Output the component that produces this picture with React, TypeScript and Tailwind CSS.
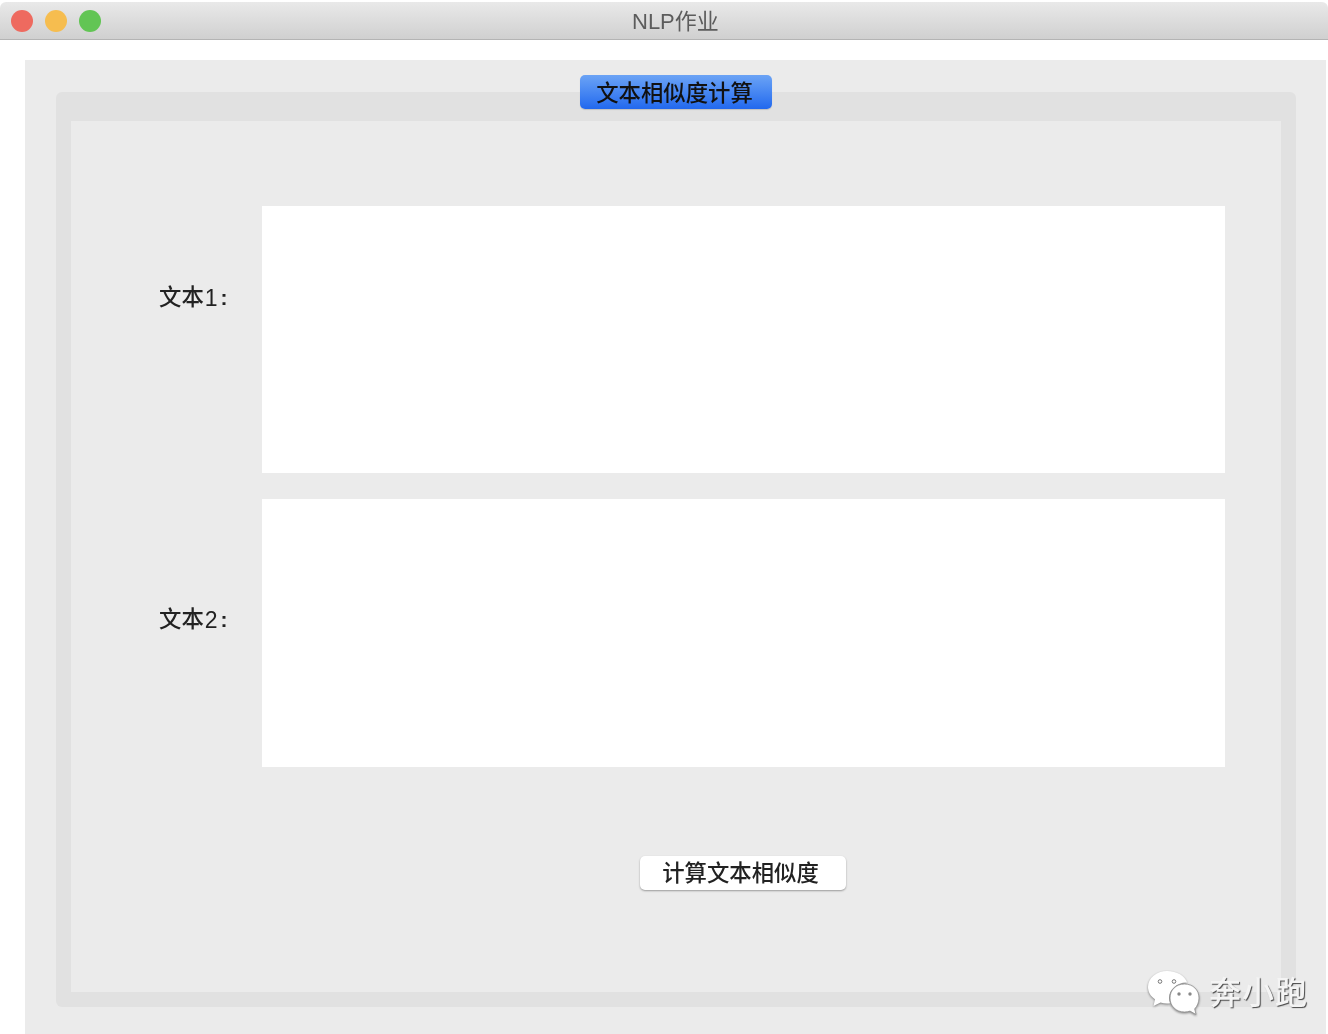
const cjk = "font-['Liberation_Sans','Noto_Sans_CJK_SC',sans-serif]";

function Traffic({ color }: { color: string }) {
  return <span className={`h-[22px] w-[22px] rounded-full ${color}`} />;
}

function WeChat() {
  return (
    <svg width="54" height="46" viewBox="0 0 54 46" className="drop-shadow-[0_1px_1px_rgba(0,0,0,0.45)]">
      <path d="M20 1C9.5 1 1 8 1 17c0 5 2.700 9.300 7 12.300L6.500 36l7-3.600c2.100.6 4.300 1 6.500 1 1 0 2-.1 3-.2-.6-1.700-1-3.400-1-5.200C22 19 30.500 12.500 39 12.500c.4 0 .8 0 1.200.1C38 6 30 1 20 1z" fill="#fff" />
      <path d="M52 28c0-8-6-14-14.500-14S23 20 23 28s6 14 14.500 14c2 0 3.800-.3 5.500-.9l6 3.400-1.300-5.600C50.200 36.200 52 32.300 52 28z" fill="#fff" stroke="#8f8f8f" strokeWidth="0.8" />
      <circle cx="13" cy="11.500" r="1.800" fill="none" stroke="#777" strokeWidth="1" />
      <circle cx="27" cy="11.500" r="1.800" fill="none" stroke="#777" strokeWidth="1" />
      <circle cx="32" cy="24" r="1.700" fill="#888" />
      <circle cx="43" cy="24" r="1.700" fill="#888" />
    </svg>
  );
}

function Label({ n }: { n: string }) {
  return (
    <span className="inline-flex items-center text-[#222] blur-[0.5px]">
      <span className="font-medium">文本</span>
      <span className="ml-[1px] font-['Liberation_Sans',sans-serif] text-[23px] font-normal">{n}</span>
      <span className="ml-[3px] font-['Liberation_Sans',sans-serif] text-[21px] font-bold">:</span>
    </span>
  );
}

export default function App() {
  return (
    <div className={`relative h-[1034px] w-[1328px] overflow-hidden bg-white ${cjk}`}>
      <div className="pt-[2px]">
        <div className="relative flex h-[38px] items-center gap-3 rounded-t-[6px] border-b border-[#b4b4b4] bg-gradient-to-b from-[#e9e9e9] to-[#d0d0d0] pl-[11px]">
          <Traffic color="bg-[#ee6a5f]" />
          <Traffic color="bg-[#f6bd4f]" />
          <Traffic color="bg-[#62c554]" />
          <span className="absolute left-[632px] top-[6px] inline-block text-[22px] leading-[28px] text-[#5c5c5c] blur-[0.5px]">NLP作业</span>
        </div>
      </div>

      <div className="ml-[25px] mt-[20px] h-[974px] w-[1301px] bg-[#ebebeb] pl-[31px] pt-[32px]">
        <div className="relative h-[915px] w-[1240px] rounded-[6px] bg-[#e1e1e1] px-[15px] pb-[15px] pt-[29px]">
          <button className="absolute left-[524px] top-[-17px] h-[34px] w-[192px] rounded-[5px] bg-gradient-to-b from-[#6ba3f5] to-[#2168ee] pr-[3px] pt-[3px] text-[22.4px] font-medium leading-[31px] text-[#111] shadow-[0_1px_1px_rgba(0,0,0,0.15)]">
            <span className="inline-block blur-[0.5px]">文本相似度计算</span>
          </button>

          <div className="h-[871px] bg-[#ebebeb] pt-[85px]">
            <div className="flex h-[267px]">
              <div className="w-[191px] pl-[88px] pt-[77px] text-[22.4px] leading-[30px]">
                <Label n="1" />
              </div>
              <div className="h-full w-[963px] bg-white" />
            </div>
            <div className="mt-[26px] flex h-[268px]">
              <div className="w-[191px] pl-[88px] pt-[106px] text-[22.4px] leading-[30px]">
                <Label n="2" />
              </div>
              <div className="h-full w-[963px] bg-white" />
            </div>
            <div className="ml-[569px] mt-[89px]">
              <button className="h-[34px] w-[206px] rounded-[5px] bg-white pr-[5px] pt-[1px] text-[22.4px] font-medium leading-[33px] text-[#222] shadow-[0_1px_2px_rgba(0,0,0,0.35)]">
                <span className="inline-block blur-[0.5px]">计算文本相似度</span>
              </button>
            </div>
          </div>
        </div>
      </div>

      <div className="absolute left-[1147px] top-[970px] flex items-center gap-[8px]">
        <WeChat />
        <span className="inline-block text-[32px] font-medium leading-[44px] tracking-[1px] text-[#f4f4f4] blur-[0.3px] [text-shadow:1px_1px_1px_rgba(0,0,0,0.7)]">奔小跑</span>
      </div>
    </div>
  );
}
